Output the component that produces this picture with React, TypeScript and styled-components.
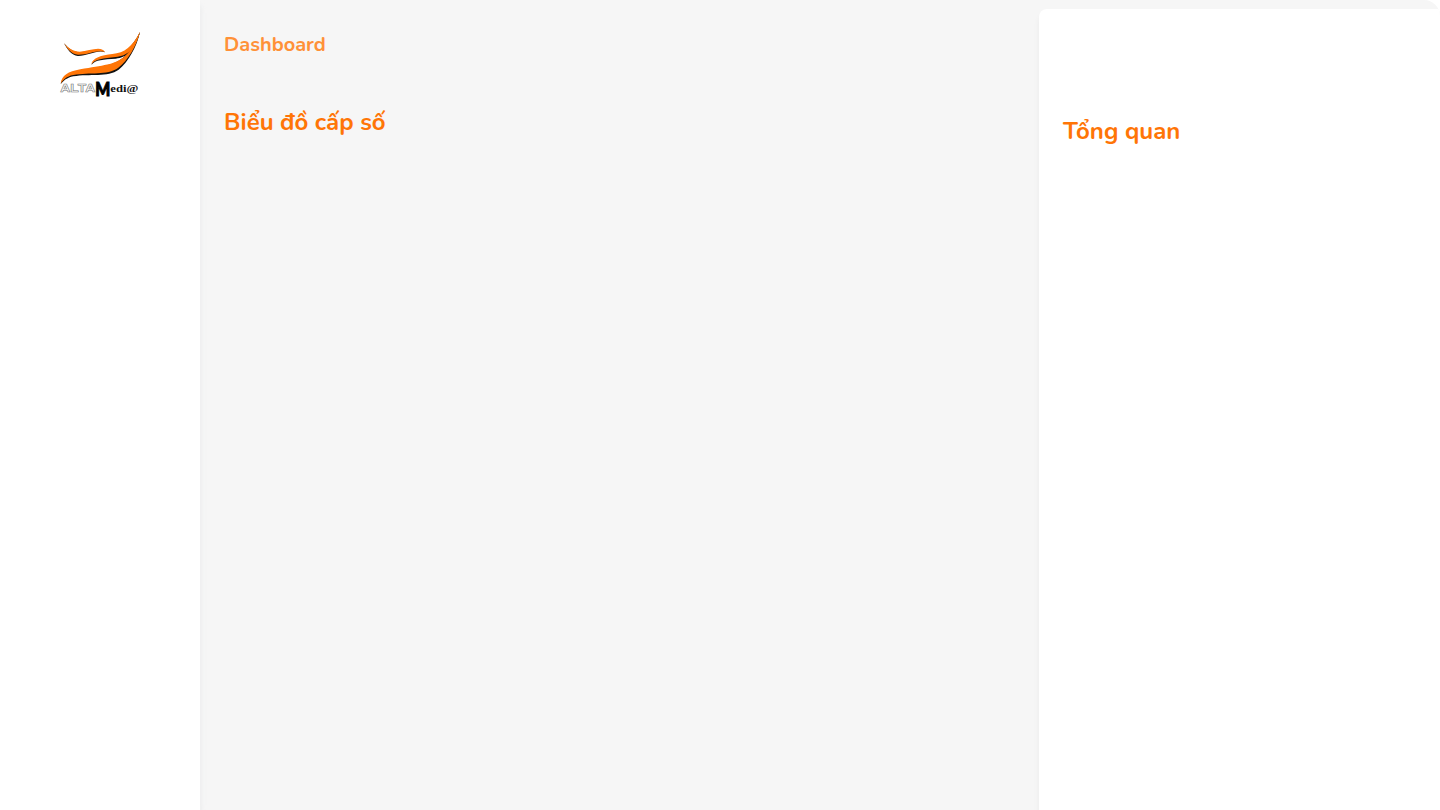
import React from "react";
import styled, { createGlobalStyle } from "styled-components";

const GlobalStyle = createGlobalStyle`
  * { box-sizing: border-box; }
  body { margin: 0; background: #fff; font-family: Nunito, Lato, "Noto Sans", sans-serif; overflow: hidden; }
`;

const Page = styled.div`
  display: flex;
  height: 100vh;
  background: #f6f6f6;
  border-top-right-radius: 16px;
  overflow: hidden;
`;

const Sidebar = styled.aside`
  width: 200px;
  flex: none;
  padding: 28px 55px;
  background: #fff;
  box-shadow: 0 4px 9px rgba(231, 233, 242, 0.2), 0 6px 6px rgba(0, 0, 0, 0.05);
`;

const Logo = styled.svg`
  display: block;
  width: 90px;
  height: 72px;
  overflow: visible;
`;

const Main = styled.main`
  flex: 1;
  padding: 30px 24px 0;
`;

const Breadcrumb = styled.h1`
  margin: 0;
  font-size: 20px;
  line-height: 30px;
  font-weight: 700;
  color: #ff9138;
`;

const Title = styled.h2<{ $top: number }>`
  margin: ${(p) => p.$top}px 0 0;
  font-size: 24px;
  line-height: 36px;
  font-weight: 700;
  color: #ff7506;
`;

const Overview = styled.section`
  width: 401px;
  flex: none;
  margin-top: 9px;
  padding: 0 24px;
  background: #fff;
  border-radius: 8px 0 0 0;
  box-shadow: 0 6px 6px rgba(0, 0, 0, 0.05);
`;

function AltaLogo() {
  return (
    <Logo viewBox="0 0 270 216" role="img" aria-label="Alta Media">
      <g fill="#111">
        <path d="M27 46C42 64 58 73 74 73C104 72 136 54 150 73C128 64 98 84 69 84C49 82 37 65 27 46Z" />
        <path d="M109 111C114 94 140 86 172 83C207 79 231 59 255 12C239 69 217 88 182 92C145 95 122 94 109 111Z" />
        <path d="M17 169C22 146 39 134 76 127C145 114 178 114 210 84C234 62 243 42 255 12C245 57 220 102 191 125C158 149 104 136 55 145C36 149 25 158 17 169Z" />
      </g>
      <g fill="#ff7506">
        <path d="M27 45C40 62 58 71 74 71C104 70 136 52 150 72C128 63 98 81 69 80C49 78 37 63 27 45Z" />
        <path d="M109 109C112 90 139 81 172 78C209 74 232 56 255 11C239 66 217 83 182 87C145 92 120 92 109 109Z" />
        <path d="M17 167C20 142 39 131 76 124C145 111 178 112 210 84C234 60 243 40 255 11C244 56 218 97 190 119C156 144 104 131 55 141C34 145 24 156 17 167Z" />
      </g>
      <text x="16" y="193" textLength="105" lengthAdjust="spacingAndGlyphs" fontFamily="Liberation Sans, sans-serif" fontWeight="700" fontSize="31" fill="#fff" stroke="#777" strokeWidth="1.5">ALTA</text>
      <text x="121" y="203" textLength="45" lengthAdjust="spacingAndGlyphs" fontFamily="Lato, sans-serif" fontWeight="900" fontSize="54" fill="#000" stroke="#000" strokeWidth="3">M</text>
      <text x="166" y="192" textLength="84" lengthAdjust="spacingAndGlyphs" fontFamily="Liberation Serif, serif" fontWeight="700" fontSize="32" fill="#111">edi@</text>
    </Logo>
  );
}

export default function App() {
  return (
    <>
      <GlobalStyle />
      <Page>
        <Sidebar>
          <AltaLogo />
        </Sidebar>
        <Main>
          <Breadcrumb>Dashboard</Breadcrumb>
          <Title $top={44}>Biểu đồ cấp số</Title>
        </Main>
        <Overview>
          <Title $top={104}>Tổng quan</Title>
        </Overview>
      </Page>
    </>
  );
}
